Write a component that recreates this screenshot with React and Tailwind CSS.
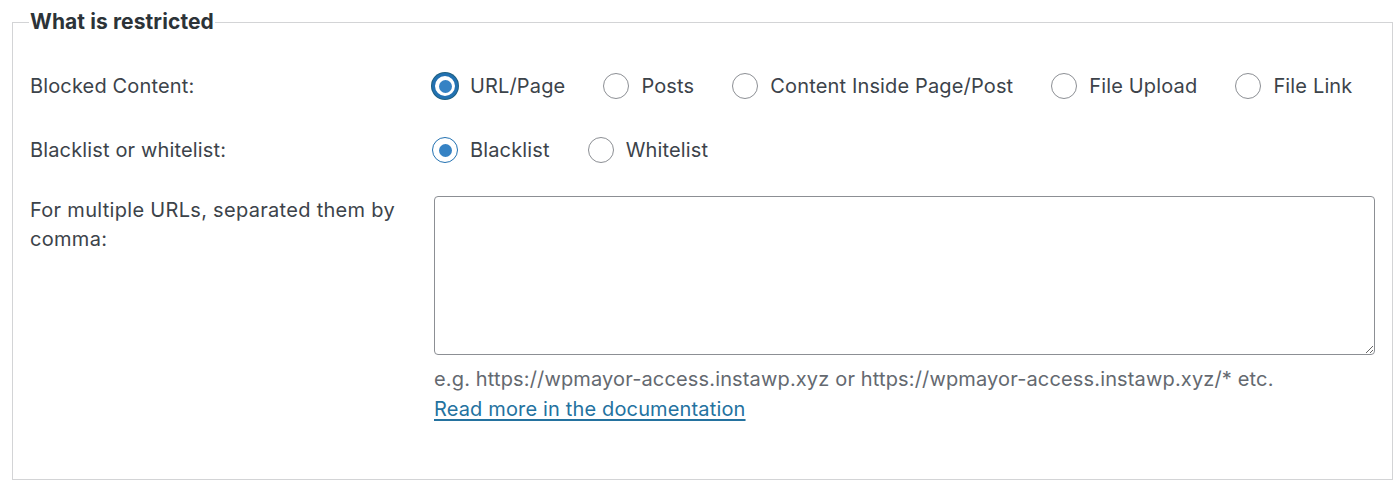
import React from "react";

function Radio({ checked, focus, label, className = "" }) {
  return (
    <label className={"flex items-center " + className}>
      <span
        className={
          "flex h-[26px] w-[26px] shrink-0 items-center justify-center rounded-full bg-white " +
          (focus
            ? "border-[3px] border-[#2271b1] shadow-[0_0_0_1px_#1e5f80]"
            : checked
            ? "border border-[#2271b1]"
            : "border border-[#8c8f94]")
        }
      >
        {checked && <span className="h-[13px] w-[13px] rounded-full bg-[#3582c4]" />}
      </span>
      <span className="ml-[12px] whitespace-nowrap">{label}</span>
    </label>
  );
}

export default function App() {
  return (
    <div
      className="min-h-[491px] bg-white pt-[8px] text-[20px] tracking-[0.15px] text-[#3c434a]"
      style={{ fontFamily: "Inter, 'Liberation Sans', sans-serif" }}
    >
      <fieldset className="mx-[12px] w-[1381px] border border-[#d3d4d6] px-[17px] pb-[55px]">
        <legend className="-ml-[1px] px-[1px] text-[21px] font-bold leading-[28px] tracking-[0.1px] text-[#2c3338]">
          What is restricted
        </legend>

        <div className="mt-[36px] flex h-[28px] items-center">
          <div className="w-[402px]">Blocked Content:</div>
          <div className="flex items-center">
            <Radio checked focus label="URL/Page" />
            <Radio label="Posts" className="ml-[38px]" />
            <Radio label="Content Inside Page/Post" className="ml-[38px]" />
            <Radio label="File Upload" className="ml-[38px]" />
            <Radio label="File Link" className="ml-[38px]" />
          </div>
        </div>

        <div className="mt-[36px] flex h-[28px] items-center">
          <div className="w-[402px]">Blacklist or whitelist:</div>
          <div className="flex items-center">
            <Radio checked label="Blacklist" />
            <Radio label="Whitelist" className="ml-[38px]" />
          </div>
        </div>

        <div className="mt-[32px] flex">
          <div className="w-[402px] pr-[4px] leading-[29px] tracking-[0.3px]">
            For multiple URLs, separated them by comma:
          </div>
          <div className="flex-1 pl-[2px]">
            <textarea className="block h-[159px] w-full resize-y rounded-[4px] border border-[#8c8f94] bg-white" />
            <p className="mt-[10px] leading-[29px] text-[#646970]">
              e.g. https://wpmayor-access.instawp.xyz or https://wpmayor-access.instawp.xyz/* etc.
            </p>
            <a href="#" className="leading-[29px] text-[#24729f] underline underline-offset-[3px]">
              Read more in the documentation
            </a>
          </div>
        </div>
      </fieldset>
    </div>
  );
}
